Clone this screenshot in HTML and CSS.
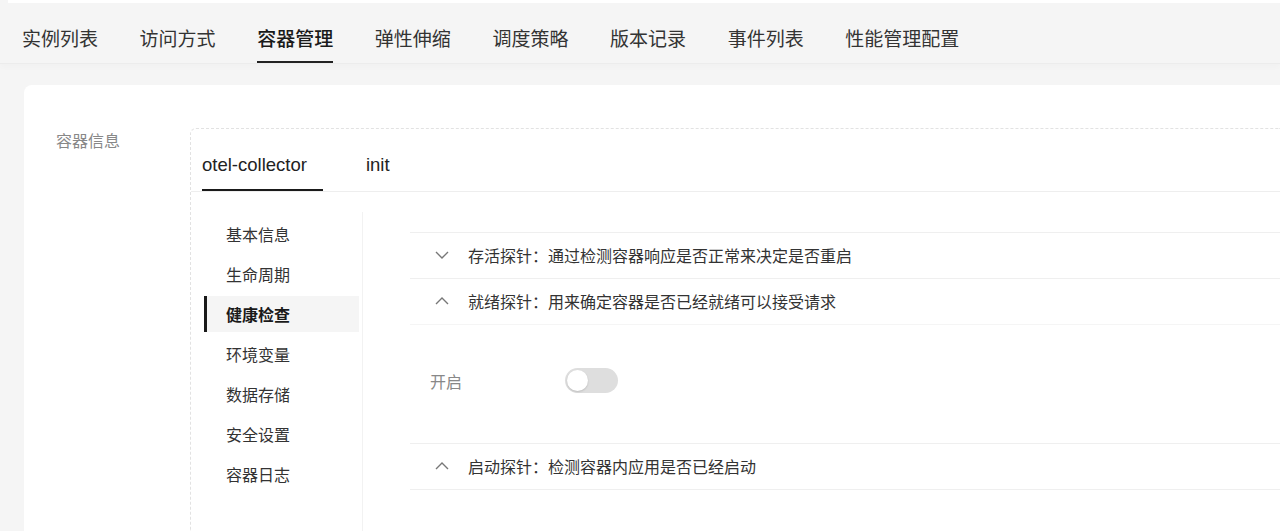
FILE: index.html
```html
<!DOCTYPE html>
<html lang="zh">
<head>
<meta charset="utf-8">
<title>容器管理</title>
<link rel="stylesheet" href="styles.css">
</head>
<body>
<div class="topstrip"></div>
<nav class="tabbar">
  <div class="tab">实例列表</div>
  <div class="tab">访问方式</div>
  <div class="tab active">容器管理</div>
  <div class="tab">弹性伸缩</div>
  <div class="tab">调度策略</div>
  <div class="tab">版本记录</div>
  <div class="tab">事件列表</div>
  <div class="tab">性能管理配置</div>
</nav>
<main class="card">
  <div class="label">容器信息</div>
  <section class="box">
    <div class="ctabs">
      <div class="ctab active">otel-collector</div>
      <div class="ctab">init</div>
    </div>
    <div class="body">
      <ul class="menu">
        <li>基本信息</li>
        <li>生命周期</li>
        <li class="on">健康检查</li>
        <li>环境变量</li>
        <li>数据存储</li>
        <li>安全设置</li>
        <li>容器日志</li>
      </ul>
      <div class="content">
        <div class="panel">
          <div class="head">
            <svg class="chev" viewBox="0 0 14 8" width="14" height="8"><polyline points="1,1 7,7 13,1"/></svg>
            <span>存活探针：通过检测容器响应是否正常来决定是否重启</span>
          </div>
        </div>
        <div class="panel">
          <div class="head">
            <svg class="chev" viewBox="0 0 14 8" width="14" height="8"><polyline points="1,7 7,1 13,7"/></svg>
            <span>就绪探针：用来确定容器是否已经就绪可以接受请求</span>
          </div>
          <div class="pbody">
            <span class="flabel">开启</span>
            <span class="switch"><span class="knob"></span></span>
          </div>
        </div>
        <div class="panel">
          <div class="head">
            <svg class="chev" viewBox="0 0 14 8" width="14" height="8"><polyline points="1,7 7,1 13,7"/></svg>
            <span>启动探针：检测容器内应用是否已经启动</span>
          </div>
        </div>
      </div>
    </div>
  </section>
</main>
</body>
</html>
```

FILE: styles.css
```css
html, body {
  margin: 0;
  padding: 0;
}
body {
  background: #f5f5f5;
  font-family: "Noto Sans CJK SC", "Liberation Sans", sans-serif;
  color: #333;
  height: 531px;
  overflow: hidden;
}
.topstrip {
  height: 3px;
  margin-left: 8px;
  background: #fff;
}
.tabbar {
  display: flex;
  gap: 41.6px;
  padding: 0 22px;
  border-bottom: 1px solid #ececec;
  box-shadow: 0 3px 6px rgba(0,0,0,0.02);
}
.tab {
  position: relative;
  font-size: 19px;
  line-height: 26px;
  padding: 22px 0 12px;
  color: #333;
  white-space: nowrap;
}
.tab.active {
  color: #1a1a1a;
  font-weight: 500;
}
.tab.active::after {
  content: "";
  position: absolute;
  left: 0;
  right: 0;
  bottom: 0;
  height: 2px;
  background: #222;
}
.card {
  box-sizing: border-box;
  margin: 21px 0 0 24px;
  background: #fff;
  border-radius: 8px 0 0 0;
  display: flex;
  padding: 43px 0 0 32px;
  height: 446px;
}
.label {
  width: 134px;
  flex: none;
  font-size: 16px;
  line-height: 22px;
  color: #888;
  margin-top: 1px;
}
.box {
  flex: 1;
  display: flex;
  flex-direction: column;
  border: 1px dashed #e2e2e2;
  border-right: none;
  border-bottom: none;
  border-radius: 6px 0 0 0;
}
.ctabs {
  display: flex;
  gap: 43px;
  padding: 24px 0 0 11px;
  border-bottom: 1px solid #eeeeee;
  font-family: "Liberation Sans", "Noto Sans CJK SC", sans-serif;
}
.ctab {
  position: relative;
  font-size: 18.5px;
  line-height: 24px;
  padding-bottom: 14px;
  color: #222;
}
.ctab.active {
  padding-right: 16px;
}
.ctab.active::after {
  content: "";
  position: absolute;
  left: 0;
  right: 0;
  bottom: 0;
  height: 2px;
  background: #1a1a1a;
}
.body {
  flex: 1;
  display: flex;
  margin-top: 20px;
}
.menu {
  list-style: none;
  margin: 0 0 0 13px;
  padding: 4px 3px 0 0;
  width: 155px;
  border-right: 1px solid #f2f2f2;
  display: flex;
  flex-direction: column;
  gap: 4px;
}
.menu li {
  height: 36px;
  line-height: 36px;
  padding-left: 19px;
  font-size: 16px;
  color: #333;
  border-left: 3px solid transparent;
}
.menu li.on {
  background: #f5f5f5;
  border-left-color: #1a1a1a;
  font-weight: 700;
  color: #1a1a1a;
}
.content {
  flex: 1;
  margin-left: 47px;
  padding-top: 20px;
}
.panel {
  border-top: 1px solid #efefef;
}
.panel:last-child {
  border-bottom: 1px solid #efefef;
}
.head {
  height: 45px;
  display: flex;
  align-items: center;
  gap: 19px;
  padding-left: 25px;
  font-size: 16px;
  line-height: 20px;
  padding-bottom: 2px;
  box-sizing: border-box;
  color: #333;
}
.chev {
  fill: none;
  stroke: #777;
  stroke-width: 1.4;
  flex: none;
}
.pbody {
  display: flex;
  align-items: center;
  padding: 43px 20px 50px;
  border-top: 1px solid #f5f5f5;
}
.flabel {
  width: 135px;
  font-size: 16px;
  color: #888;
  line-height: 22px;
}
.switch {
  position: relative;
  width: 53px;
  height: 25px;
  border-radius: 13px;
  background: #dedede;
}
.knob {
  position: absolute;
  left: 2px;
  top: 2px;
  width: 21px;
  height: 21px;
  border-radius: 50%;
  background: #fff;
  box-shadow: 0 1px 2px rgba(0,0,0,0.15);
}
```
